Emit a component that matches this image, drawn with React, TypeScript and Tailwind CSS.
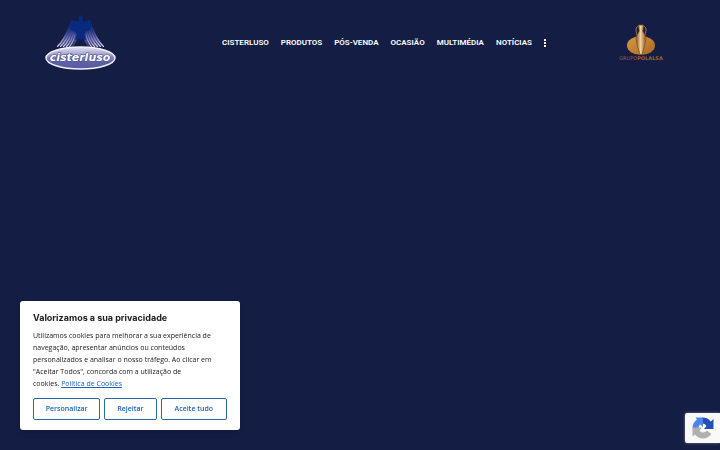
import React from 'react';

const navItems = [
  { label: 'CISTERLUSO', href: '#cisterluso' },
  { label: 'PRODUTOS', href: '#produtos' },
  { label: 'PÓS-VENDA', href: '#pos-venda' },
  { label: 'OCASIÃO', href: '#ocasiao' },
  { label: 'MULTIMÉDIA', href: '#multimedia' },
  { label: 'NOTÍCIAS', href: '#noticias' },
];

function Wing() {
  return (
    <>
      <path d="M27 6C24 15 20 25 13.500 32L29 33C32 29 33 25 35 20L33 8Z" fill="url(#wing-base)" />
      <g fill="none" stroke="url(#feather)" strokeWidth="1.100" strokeLinecap="round">
        <path d="M24 15C22 21 19 27 13.500 32.500" />
        <path d="M26 16C24 23 21 28 16.500 32.500" />
        <path d="M28 17C26 24 24 28 19.500 32.500" />
        <path d="M29.500 18C28.500 24 26 29 22.500 32.500" />
        <path d="M31 20C30 26 28.500 29 25.500 32.500" />
      </g>
    </>
  );
}

function CisterlusoLogo() {
  return (
    <svg viewBox="0 0 72 58" className="h-[58px] w-[72px]" role="img" aria-label="Cisterluso">
      <defs>
        <linearGradient id="wing-base" gradientUnits="userSpaceOnUse" x1="0" y1="8" x2="0" y2="34">
          <stop offset="0" stopColor="#0a2c80" />
          <stop offset="0.35" stopColor="#1b3080" />
          <stop offset="0.7" stopColor="#4a4c90" />
          <stop offset="1" stopColor="#4a4c90" stopOpacity="0.4" />
        </linearGradient>
        <linearGradient id="feather" gradientUnits="userSpaceOnUse" x1="0" y1="15" x2="0" y2="34">
          <stop offset="0" stopColor="#4a509c" stopOpacity="0.2" />
          <stop offset="0.5" stopColor="#8685be" />
          <stop offset="1" stopColor="#e8e8f8" />
        </linearGradient>
        <linearGradient id="oval" x1="0" y1="0" x2="0" y2="1">
          <stop offset="0" stopColor="#e4e4f4" />
          <stop offset="0.35" stopColor="#a09fcd" />
          <stop offset="0.7" stopColor="#5f5fa6" />
          <stop offset="1" stopColor="#5a5aa2" />
        </linearGradient>
      </defs>
      {/* Asas */}
      <Wing />
      <g transform="translate(73 0) scale(-1 1)">
        <Wing />
      </g>
      {/* Águia */}
      <path
        d="M35 2.500 37 1 39 3 38.500 6 40 8 45 6 47 11 46 16 42 17 40 20 42 26 38 25 36.500 27 35 25 31 26 33 20 31 17 27 16 26 11 28 6 33 8 35 6Z"
        fill="#082a7e"
      />
      <ellipse cx="36.500" cy="44" rx="34.500" ry="11" fill="url(#oval)" stroke="#f1f1fa" strokeWidth="1.400" />
      <text
        x="36"
        y="47"
        textAnchor="middle"
        className="font-['DejaVu_Sans',sans-serif] text-[11px] font-bold italic"
        fill="#ffffff"
        stroke="#454785"
        strokeWidth="1.200"
        paintOrder="stroke"
      >
        cisterluso
      </text>
    </svg>
  );
}

function PolalsaLogo() {
  return (
    <svg viewBox="0 0 46 38" className="h-[38px] w-[46px]" role="img" aria-label="Grupo Polalsa">
      <defs>
        <linearGradient id="amphora" x1="0" y1="0" x2="1" y2="0">
          <stop offset="0" stopColor="#8a5424" />
          <stop offset="0.45" stopColor="#efd2a0" />
          <stop offset="1" stopColor="#94581f" />
        </linearGradient>
        <linearGradient id="disc" x1="0" y1="0" x2="1" y2="1">
          <stop offset="0" stopColor="#d99a44" />
          <stop offset="1" stopColor="#a9661f" />
        </linearGradient>
      </defs>
      <ellipse cx="23" cy="21.500" rx="14" ry="9.500" fill="url(#disc)" />
      <path
        d="M20.500 2.500C17.500 2 17.500 7 19 11M25.500 2.500C28.500 2 28.500 7 27 11"
        fill="none"
        stroke="#a87440"
        strokeWidth="1"
      />
      <path
        d="M20.500 1H25.500L24.800 7C25 9 28 10.500 27.800 15C27.500 20 25.500 25 24 30.500H22C20.500 25 18.500 20 18.200 15C18 10.500 21 9 21.200 7Z"
        fill="url(#amphora)"
        stroke="#7d4a1e"
        strokeWidth="0.700"
      />
      <text
        x="23"
        y="36"
        textAnchor="middle"
        className="font-['DejaVu_Sans',sans-serif] text-[5px]"
        fill="#9a632c"
      >
        GRUPO<tspan fontWeight="700">POLALSA</tspan>
      </text>
    </svg>
  );
}

function Header() {
  return (
    <header className="grid grid-cols-[1fr_auto_1fr] items-center pt-[14px] pl-11">
      <a href="#inicio" className="justify-self-start">
        <CisterlusoLogo />
      </a>
      <nav className="ml-1 flex items-center gap-3 font-['Roboto',sans-serif] text-[8px] leading-3 font-semibold text-white">
        {navItems.map((item) => (
          <a key={item.href} href={item.href}>
            {item.label}
          </a>
        ))}
        <button type="button" aria-label="Mais" className="flex flex-col gap-px">
          <span className="size-[2px] bg-white" />
          <span className="size-[2px] bg-white" />
          <span className="size-[2px] bg-white" />
        </button>
      </nav>
      <a href="#polalsa" className="mr-14 justify-self-end">
        <PolalsaLogo />
      </a>
    </header>
  );
}

function CookieBanner() {
  const buttonClass = 'h-[22px] rounded-[2px] border border-[#2a68ac] text-center text-[#1863bd]';

  return (
    <section
      aria-labelledby="cookie-title"
      className="fixed bottom-5 left-5 w-[220px] rounded-[3px] bg-white px-[13px] pt-[11px] pb-[10px] font-['Open_Sans',sans-serif] text-[#212121] shadow-md"
    >
      <h2 id="cookie-title" className="font-['Inter',sans-serif] text-[9px] leading-3 font-bold">
        Valorizamos a sua privacidade
      </h2>
      <p className="mt-[6px] text-[7px] leading-3">
        Utilizamos cookies para melhorar a sua experiência de
        <br />
        navegação, apresentar anúncios ou conteúdos
        <br />
        personalizados e analisar o nosso tráfego. Ao clicar em
        <br />
        "Aceitar Todos", concorda com a utilização de
        <br />
        cookies.{' '}
        <a href="#cookies" className="text-[#1863bd] underline">
          Política de Cookies
        </a>
      </p>
      <div className="mt-2 grid grid-cols-[67fr_52fr_66fr] gap-1 text-[7px] font-semibold">
        <button type="button" className={buttonClass}>Personalizar</button>
        <button type="button" className={buttonClass}>Rejeitar</button>
        <button type="button" className={buttonClass}>Aceite tudo</button>
      </div>
    </section>
  );
}

function RecaptchaBadge() {
  return (
    <aside className="fixed right-0 bottom-[7px] flex h-[30px] w-[35px] items-center justify-center rounded-l-[2px] bg-[#f9f9f9] shadow-[0_0_3px_#808080]">
      <svg viewBox="0 0 22 22" className="size-[22px]" role="img" aria-label="reCAPTCHA">
        <path d="M10 0.500C14 0.500 17 2 18.800 4.500L21.500 2V12H12L14.500 9C13.800 7.500 12.500 6.500 10 6.500Z" fill="#2050b8" />
        <path d="M11 0.500H3.500L5 2.500C2 4.500 0.500 7.500 0.500 11.500H6.500C6.500 9.500 7 8.500 8.200 7.500L11 10Z" fill="#4a86e8" />
        <path d="M0.500 10.500V19.500L3 17.500C5 20 8 21.500 11 21.500C14.500 21.500 17.500 19.700 19.500 17L14.800 13.500C14 14.800 12.800 15.500 11 15.500C9.300 15.500 8.300 14.800 7.500 13.500L10 10.500Z" fill="#b0b0b0" />
      </svg>
    </aside>
  );
}

export default function App() {
  return (
    <div className="min-h-screen bg-[#141d44]">
      <Header />
      <CookieBanner />
      <RecaptchaBadge />
    </div>
  );
}
